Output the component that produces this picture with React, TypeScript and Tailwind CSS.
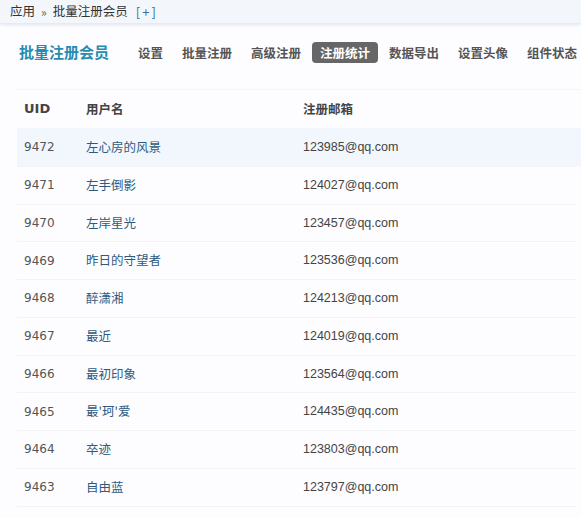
const navItems = ["设置", "批量注册", "高级注册", "注册统计", "数据导出", "设置头像", "组件状态"];

const members = [
  { uid: 9472, name: "左心房的风景", email: "123985@qq.com" },
  { uid: 9471, name: "左手倒影", email: "124027@qq.com" },
  { uid: 9470, name: "左岸星光", email: "123457@qq.com" },
  { uid: 9469, name: "昨日的守望者", email: "123536@qq.com" },
  { uid: 9468, name: "醉潇湘", email: "124213@qq.com" },
  { uid: 9467, name: "最近", email: "124019@qq.com" },
  { uid: 9466, name: "最初印象", email: "123564@qq.com" },
  { uid: 9465, name: "最'珂'爱", email: "124435@qq.com" },
  { uid: 9464, name: "卒迹", email: "123803@qq.com" },
  { uid: 9463, name: "自由蓝", email: "123797@qq.com" },
  { uid: 9462, name: "紫色心情", email: "123911@qq.com" },
];

export default function App() {
  return (
    <div className="w-[581px] h-[518px] overflow-hidden bg-[#fdfdff] text-[13px] text-[#444] whitespace-nowrap font-['DejaVu_Sans','Noto_Sans_CJK_SC',sans-serif]">
      {/* breadcrumb */}
      <div className="h-[24px] flex items-center pl-[10px] bg-[#f3f6fb] border-b border-[#e6ebf3] shadow-[0_1px_3px_rgba(200,210,225,0.5)] text-[12.5px] text-[#333] font-['Noto_Sans_CJK_SC',sans-serif]">
        <span>应用</span>
        <span className="mx-[6px] text-[#666] text-[12px]">»</span>
        <span>批量注册会员</span>
        <span className="ml-[8px] text-[13px] tracking-[2px] text-[#3a6fa0]">[+]</span>
      </div>

      {/* plugin nav */}
      <div className="h-[56px] flex items-center pl-[19px] font-['Noto_Sans_CJK_SC',sans-serif] font-bold">
        <span className="shrink-0 text-[15px] text-[#2a8bb0] mr-[21px]">批量注册会员</span>
        <div className="flex shrink-0 gap-[3px] text-[12.5px]">
          {navItems.map((item) => (
            <span
              key={item}
              className={
                item === "注册统计"
                  ? "shrink-0 px-[8px] h-[21px] leading-[21px] rounded-[4px] bg-[#666] text-white"
                  : "shrink-0 px-[8px] h-[21px] leading-[21px] text-[#555]"
              }
            >
              {item}
            </span>
          ))}
        </div>
      </div>

      {/* members table */}
      <div className="ml-[17px] mt-[9px]">
        <div className="flex items-center h-[39px] border-t border-[#f3f4f6] font-bold text-[#444]">
          <span className="w-[69px] pl-[7px]">UID</span>
          <span className="w-[217px] text-[12.5px] font-['Noto_Sans_CJK_SC',sans-serif]">用户名</span>
          <span className="text-[12.5px] font-['Noto_Sans_CJK_SC',sans-serif]">注册邮箱</span>
        </div>
        {members.map((m, i) => (
          <div
            key={m.uid}
            className={
              i === 0
                ? "flex items-center h-[37.75px] bg-[#f2f7fd]"
                : "flex items-center h-[37.75px] border-t border-[#f2f3f5] mr-[5px]"
            }
          >
            <span className="w-[69px] pl-[7px] text-[12px] text-[#555]">{m.uid}</span>
            <span className="w-[217px] text-[12.5px] text-[#2f5a80] font-['Noto_Sans_CJK_SC',sans-serif]">{m.name}</span>
            <span className="text-[12.5px] text-[#444] font-['Liberation_Sans',sans-serif]">{m.email}</span>
          </div>
        ))}
      </div>
    </div>
  );
}
